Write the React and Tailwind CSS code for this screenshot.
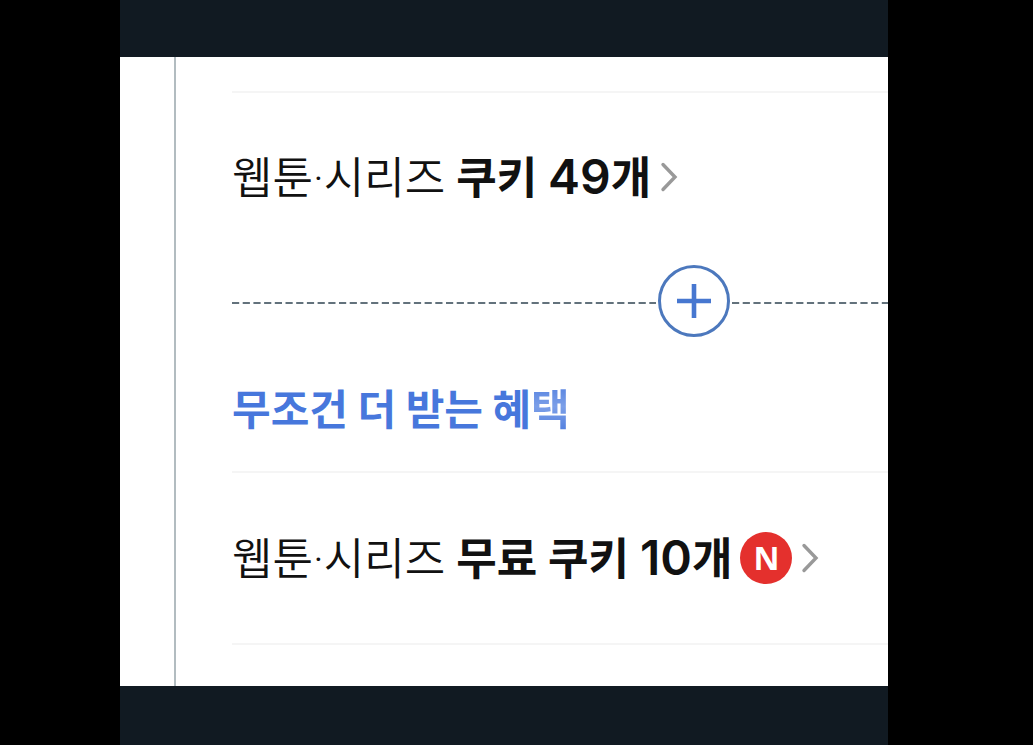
function ChevronIcon() {
  return (
    <svg
      className="h-8 w-5 shrink-0"
      viewBox="0 0 20 32"
      fill="none"
      stroke="#999999"
      strokeWidth="3.4"
      strokeLinecap="round"
      aria-hidden="true"
    >
      <path d="M4 3.5l12 12.5L4 28.5" />
    </svg>
  )
}

function DashedLine({ className }) {
  return (
    <svg className={`mt-1 h-1 min-w-0 ${className}`} aria-hidden="true">
      <line x1="0" y1="2" x2="100%" y2="2" stroke="#63727c" strokeWidth="2" strokeDasharray="7.2 3.5" />
    </svg>
  )
}

function NaverBadge() {
  return (
    <span className="ml-2 flex h-13 w-13 shrink-0 items-center justify-center rounded-full bg-[#e4302d] font-['Open_Sans',sans-serif] text-[32px] leading-none font-bold text-white">
      N
    </span>
  )
}

function BenefitLink({ label, item, count, badge }) {
  return (
    <a
      href="#"
      className="flex h-16 items-center font-['Roboto','Noto_Sans_CJK_KR',sans-serif] text-[44px] leading-[64px] whitespace-nowrap text-[#111111]"
    >
      <span className="pt-1">
        <span className="font-[350]">{label}</span>{' '}
        <strong className="font-bold">
          {item} <span className="font-['Inter',sans-serif] text-[48px] leading-none font-semibold">{count}</span>개
        </strong>
      </span>
      {badge}
      <span className="ml-2 flex">
        <ChevronIcon />
      </span>
    </a>
  )
}

export default function App() {
  return (
    <div className="flex min-h-screen flex-col bg-black pr-[145px] pl-[120px] font-['Noto_Sans_CJK_KR',sans-serif]">
      <div className="h-[57px] bg-[#111a22]" />
      <main className="bg-white pl-[54px]">
        <div className="overflow-hidden border-l-2 border-[#b2bcc0] pt-[34px] pb-[41px] pl-14">
          <section className="border-t-2 border-[#f5f5f5] pt-[52px]">
            <BenefitLink label="웹툰·시리즈" item="쿠키" count={49} />
          </section>

          <div className="mt-14 flex items-center">
            <DashedLine className="w-[424px] shrink" />
            <button
              type="button"
              aria-label="혜택 더하기"
              className="mx-0.5 flex h-[72px] w-[72px] shrink-0 items-center justify-center rounded-full border-3 border-[#4c78bd] bg-white"
            >
              <svg className="h-9 w-9" viewBox="0 0 36 36" fill="none" stroke="#4777d0" strokeWidth="4.6" aria-hidden="true">
                <path d="M1 18h34M18 1v34" />
              </svg>
            </button>
            <DashedLine className="flex-1" />
          </div>

          <h2 className="mt-[38px] text-[42px] leading-[64px] font-bold whitespace-nowrap text-[#4777dc]">
            무조건 더 받는 혜<span className="bg-linear-to-b from-[#4777dc] via-[#7c9fe8] to-[#4777dc] bg-clip-text text-transparent">택</span>
          </h2>

          <section className="mt-8 border-y-2 border-[#f5f5f5] pt-[53px] pb-[53px]">
            <BenefitLink label="웹툰·시리즈" item="무료 쿠키" count={10} badge={<NaverBadge />} />
          </section>
        </div>
      </main>
      <div className="flex-1 bg-[#111a22]" />
    </div>
  )
}
